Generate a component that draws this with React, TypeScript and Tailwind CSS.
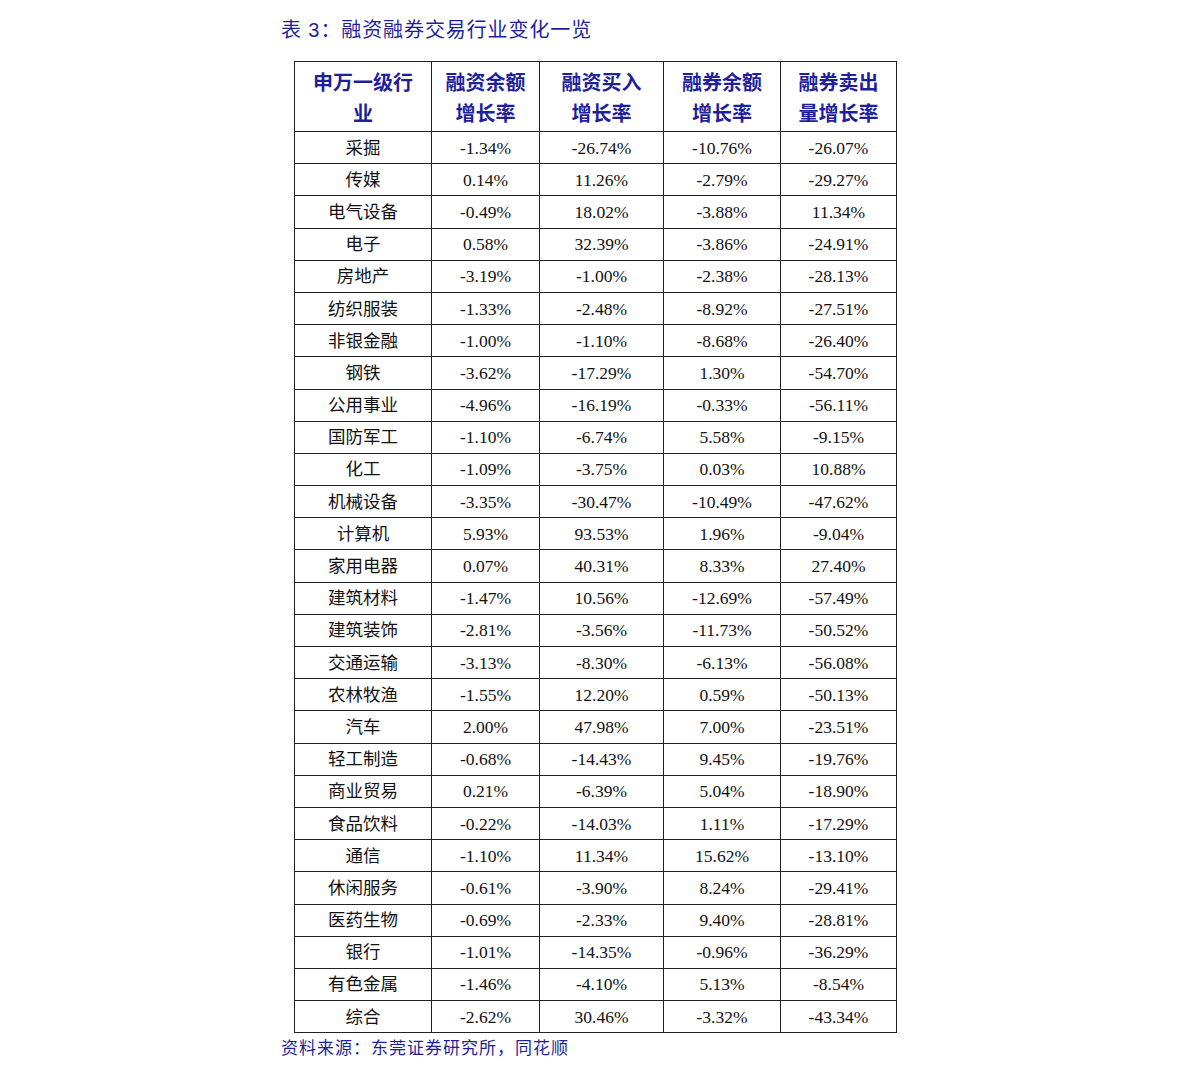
const rows: [string, string, string, string, string][] = [
	['采掘', '-1.34%', '-26.74%', '-10.76%', '-26.07%'],
	['传媒', '0.14%', '11.26%', '-2.79%', '-29.27%'],
	['电气设备', '-0.49%', '18.02%', '-3.88%', '11.34%'],
	['电子', '0.58%', '32.39%', '-3.86%', '-24.91%'],
	['房地产', '-3.19%', '-1.00%', '-2.38%', '-28.13%'],
	['纺织服装', '-1.33%', '-2.48%', '-8.92%', '-27.51%'],
	['非银金融', '-1.00%', '-1.10%', '-8.68%', '-26.40%'],
	['钢铁', '-3.62%', '-17.29%', '1.30%', '-54.70%'],
	['公用事业', '-4.96%', '-16.19%', '-0.33%', '-56.11%'],
	['国防军工', '-1.10%', '-6.74%', '5.58%', '-9.15%'],
	['化工', '-1.09%', '-3.75%', '0.03%', '10.88%'],
	['机械设备', '-3.35%', '-30.47%', '-10.49%', '-47.62%'],
	['计算机', '5.93%', '93.53%', '1.96%', '-9.04%'],
	['家用电器', '0.07%', '40.31%', '8.33%', '27.40%'],
	['建筑材料', '-1.47%', '10.56%', '-12.69%', '-57.49%'],
	['建筑装饰', '-2.81%', '-3.56%', '-11.73%', '-50.52%'],
	['交通运输', '-3.13%', '-8.30%', '-6.13%', '-56.08%'],
	['农林牧渔', '-1.55%', '12.20%', '0.59%', '-50.13%'],
	['汽车', '2.00%', '47.98%', '7.00%', '-23.51%'],
	['轻工制造', '-0.68%', '-14.43%', '9.45%', '-19.76%'],
	['商业贸易', '0.21%', '-6.39%', '5.04%', '-18.90%'],
	['食品饮料', '-0.22%', '-14.03%', '1.11%', '-17.29%'],
	['通信', '-1.10%', '11.34%', '15.62%', '-13.10%'],
	['休闲服务', '-0.61%', '-3.90%', '8.24%', '-29.41%'],
	['医药生物', '-0.69%', '-2.33%', '9.40%', '-28.81%'],
	['银行', '-1.01%', '-14.35%', '-0.96%', '-36.29%'],
	['有色金属', '-1.46%', '-4.10%', '5.13%', '-8.54%'],
	['综合', '-2.62%', '30.46%', '-3.32%', '-43.34%'],
];

const headers = [
	['申万一级行', '业'],
	['融资余额', '增长率'],
	['融资买入', '增长率'],
	['融券余额', '增长率'],
	['融券卖出', '量增长率'],
];

const widths = ['w-[137px]', 'w-[108px]', 'w-[124px]', 'w-[117px]', 'w-[116px]'];

export default function App() {
	return (
		<div className="w-[1191px] h-[1078px] bg-white pl-[281px] pt-[17px] font-['Liberation_Serif','Noto_Sans_CJK_SC',serif]">
			<div className="text-[20px] leading-[26px] tracking-[0.9px] text-[#1f1f9c] font-['Liberation_Sans','Noto_Sans_CJK_SC',sans-serif]">
				表 3：融资融券交易行业变化一览
			</div>
			<table className="mt-[18px] ml-[13px] border-collapse border-[1.5px] border-[#333] table-fixed">
				<thead>
					<tr className="h-[70px]">
						{headers.map((h, i) => (
							<th
								className={`${widths[i]} border border-[#222] align-middle text-center text-[20px] leading-[31px] font-bold text-[#1f1f9c] font-['Noto_Sans_CJK_SC',sans-serif]`}
								key={i}
							>
								{h[0]}
								<br />
								{h[1]}
							</th>
						))}
					</tr>
				</thead>
				<tbody>
					{rows.map((r) => (
						<tr className="h-[32.2px]" key={r[0]}>
							{r.map((c, j) => (
								<td
									className="border border-[#222] p-0 text-center align-middle text-[17.5px] leading-[20px] text-[#111]"
									key={j}
								>
									{c}
								</td>
							))}
						</tr>
					))}
				</tbody>
			</table>
			<div className="mt-[5px] text-[17px] leading-[22px] tracking-[1px] text-[#1f1f9c] font-['Liberation_Sans','Noto_Sans_CJK_SC',sans-serif]">
				资料来源：东莞证券研究所，同花顺
			</div>
		</div>
	);
}
